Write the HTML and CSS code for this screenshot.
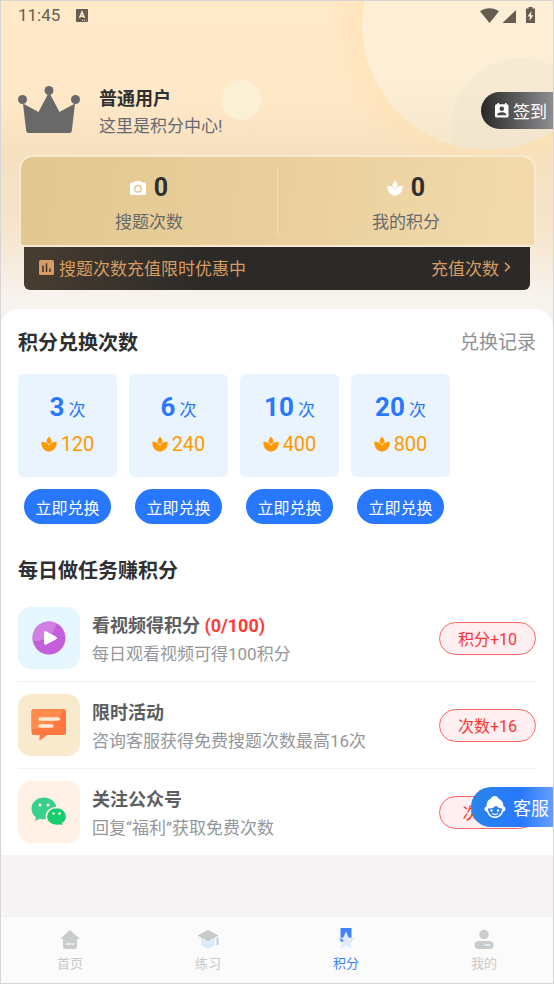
FILE: index.html
```html
<!DOCTYPE html>
<html lang="zh-CN">
<head>
<meta charset="utf-8">
<meta name="viewport" content="width=device-width, initial-scale=1">
<title>积分中心</title>
<link rel="stylesheet" href="styles.css">
</head>
<body>
<svg class="defs" aria-hidden="true">
  <symbol id="spa" viewBox="0 0 18 18">
    <path d="M9 .5C7.500 2.300 6.200 4.200 6.200 5.800 6.200 7.300 7.600 8.600 9 8.900c1.400-.3 2.800-1.600 2.800-3.100C11.800 4.200 10.500 2.300 9 .5Z"/>
    <path d="M9 10.600C7.500 8.200 4.500 6.400.4 6.500 0 13 4 17.300 9 17.600c5-.3 9-4.600 8.600-11.100-4.100-.1-7.100 1.700-8.600 4.100Z"/>
  </symbol>
</svg>
<div class="app">
  <header class="hero">
    <svg class="hero-art" viewBox="0 0 552 308" preserveAspectRatio="xMaxYMin meet" aria-hidden="true">
      <defs>
        <clipPath id="sun"><circle cx="486" cy="24" r="125"/></clipPath>
        <radialGradient id="halo"><stop offset=".78" stop-color="#ffe0ab" stop-opacity=".5"/><stop offset="1" stop-color="#ffe3b8" stop-opacity=".12"/></radialGradient>
        <linearGradient id="disc" x1="0" y1="0" x2="0" y2="1"><stop offset=".7" stop-color="#fcefd5"/><stop offset="1" stop-color="#f4e7cc"/></linearGradient>
      </defs>
      <circle cx="486" cy="24" r="157" fill="url(#halo)"/>
      <circle cx="486" cy="24" r="125" fill="url(#disc)"/>
      <circle cx="520" cy="127" r="70" fill="#efe3ce" opacity=".35" clip-path="url(#sun)"/>
      <circle cx="240" cy="99" r="20" fill="#fbefd4"/>
    </svg>
    <div class="status">
      <span class="clock">11:45</span>
      <svg width="12" height="13" viewBox="0 0 12 13"><rect width="12" height="13" rx="1" fill="#665d50"/><path d="M3.500 9 6 3l2.500 6M4.500 7.200h3" fill="none" stroke="#ffe9c9" stroke-width="1.500"/><path d="M6 11.300h4.500" stroke="#ffe9c9" stroke-dasharray="1 1"/></svg>
      <svg class="signals" width="56" height="17" viewBox="0 0 56 17" fill="#665d50"><path d="M0 4.200C5.500.1 13.500.1 19 4.200L9.500 16Z"/><path d="M36 3v13H22.500Z"/><path d="M48.500 0h4v1.500H55V16h-9V1.500h2.500Z"/><path d="m51.500 4-4 5.400h2.400L49.400 14l4-5.800H51Z" fill="#fcefd5"/></svg>
    </div>
    <div class="profile">
      <svg class="crown" width="62" height="48" viewBox="0 0 62 48" fill="#696969"><circle cx="31" cy="4.500" r="4.500"/><circle cx="4.500" cy="13.500" r="4.500"/><circle cx="57.500" cy="13.500" r="4.500"/><path d="M5 17.500 20.500 26 29.500 9h3L41.500 26 57 17.500 53.800 45q-.2 2-2.300 2H10.500q-2 0-2.300-2Z"/></svg>
      <div class="who">
        <h1>普通用户</h1>
        <p>这里是积分中心!</p>
      </div>
      <button class="checkin" type="button">
        <svg width="14" height="15" viewBox="0 0 14 15"><path fill="#fff" fill-rule="evenodd" d="M2.500 0H4v1.300h6V0h1.500v1.300H12A1.500 1.500 0 0 1 13.500 2.800V13A1.500 1.500 0 0 1 12 14.500H1.500A1.500 1.500 0 0 1 0 13V2.800A1.500 1.500 0 0 1 1.500 1.300h1ZM6.800 3.500a2.300 2.300 0 1 0 0 4.600 2.300 2.300 0 0 0 0-4.600ZM2.300 12.300h9v-.8C11.300 10 8.300 9.200 6.800 9.200s-4.500.8-4.500 2.300Z"/></svg>
        <span>签到</span>
      </button>
    </div>
    <div class="balance">
      <div class="stat">
        <div class="value"><svg width="16" height="14" viewBox="0 0 16 14"><path fill="#fff" fill-rule="evenodd" d="M5.300 0h5.400l1.300 1.600h2.500A1.500 1.500 0 0 1 16 3.100v9.400a1.500 1.500 0 0 1-1.500 1.500h-13A1.500 1.500 0 0 1 0 12.500V3.100a1.500 1.500 0 0 1 1.500-1.500H4ZM8 3.700a4 4 0 1 0 0 8 4 4 0 0 0 0-8Zm0 1.500a2.500 2.500 0 1 1 0 5 2.500 2.500 0 0 1 0-5Z"/></svg><strong>0</strong></div>
        <p>搜题次数</p>
      </div>
      <div class="stat">
        <div class="value"><svg width="16" height="16" fill="#fff"><use href="#spa"/></svg><strong>0</strong></div>
        <p>我的积分</p>
      </div>
    </div>
    <a class="promo" href="#recharge">
      <svg width="15" height="15" viewBox="0 0 15 15"><rect width="15" height="15" rx="1.500" fill="#d79c62"/><path d="M4 5.500V12M7.500 3.200V12M11 8.500V12" stroke="#3f352a" stroke-width="1.500"/></svg>
      <span>搜题次数充值限时优惠中</span>
      <span class="more">充值次数</span>
      <svg width="7" height="10" viewBox="0 0 7 10"><path d="m1 .8 4.300 4.200L1 9.200" fill="none" stroke="#d79c62" stroke-width="1.600"/></svg>
    </a>
  </header>

  <main class="sheet">
    <section>
      <div class="section-head"><h2>积分兑换次数</h2><a href="#history">兑换记录</a></div>
      <div class="offers">
        <div class="offer"><div class="card"><p class="count"><strong>3</strong> 次</p><p class="cost"><svg width="16" height="16"><use href="#spa"/></svg>120</p></div><button type="button">立即兑换</button></div>
        <div class="offer"><div class="card"><p class="count"><strong>6</strong> 次</p><p class="cost"><svg width="16" height="16"><use href="#spa"/></svg>240</p></div><button type="button">立即兑换</button></div>
        <div class="offer"><div class="card"><p class="count"><strong>10</strong> 次</p><p class="cost"><svg width="16" height="16"><use href="#spa"/></svg>400</p></div><button type="button">立即兑换</button></div>
        <div class="offer"><div class="card"><p class="count"><strong>20</strong> 次</p><p class="cost"><svg width="16" height="16"><use href="#spa"/></svg>800</p></div><button type="button">立即兑换</button></div>
      </div>
    </section>
    <section>
      <div class="section-head tasks-head"><h2>每日做任务赚积分</h2></div>
      <ul class="tasks">
        <li>
          <span class="tile video"><svg width="34" height="34" viewBox="0 0 34 34"><circle cx="17" cy="17" r="16.500" fill="#c45fdb"/><path d="M.5 17A16.500 16.500 0 0 1 24 2C24 12 13 21 .8 20Z" fill="#d07fe2"/><path d="M12.500 11.500q0-1.500 1.300-.8l10.300 5.500q1.300.8 0 1.600l-10.300 5.500q-1.300.7-1.300-.8Z" fill="#fff" stroke="#fff" stroke-linejoin="round"/></svg></span>
          <div class="info"><h3>看视频得积分 <em>(0/100)</em></h3><p>每日观看视频可得100积分</p></div>
          <button type="button">积分+10</button>
        </li>
        <li>
          <span class="tile chat"><svg width="36" height="32" viewBox="0 0 36 32"><path d="M3 0h29.500a2.500 2.500 0 0 1 2.500 2.500v21a2.500 2.500 0 0 1-2.500 2.500H16l-6.500 5q-1.500.7-1.200-1L9 26H3a2.500 2.500 0 0 1-2.500-2.500v-21A2.500 2.500 0 0 1 3 0Z" fill="#ff7840"/><path d="M3 0h29C29 11 16 20 .5 20V2.500A2.500 2.500 0 0 1 3 0Z" fill="#ff8b4e"/><path d="M9 10h18.500M9 17h12" stroke="#ffead5" stroke-width="3.500" stroke-linecap="round"/></svg></span>
          <div class="info"><h3>限时活动</h3><p>咨询客服获得免费搜题次数最高16次</p></div>
          <button type="button">次数+16</button>
        </li>
        <li>
          <span class="tile wechat"><svg width="36" height="30" viewBox="0 0 36 30"><path d="M13 .5C6 .5.500 5.200.500 11.500c0 4 2 7 4.500 9L3.800 24l5-2.300q2.200.6 4.200.6C20 22.300 25.500 17.500 25.500 11.500S20 .5 13 .5Z" fill="#38d08a"/><path d="M25.500 10.500c-5.800 0-10.200 4-10.200 9s4.400 9 10.200 9q1.800 0 3.300-.4l3.500 1.500-.6-3.200c2.300-1.500 4-4 4-6.900 0-5-4.400-9-10.200-9Z" fill="#16ce6d" stroke="#fff1e5" stroke-width="1.500"/><g fill="#fff1e5"><circle cx="9" cy="8" r="1.500"/><circle cx="17" cy="8" r="1.500"/><circle cx="22.500" cy="16.500" r="1.200"/><circle cx="28.500" cy="16.500" r="1.200"/></g></svg></span>
          <div class="info"><h3>关注公众号</h3><p>回复“福利”获取免费次数</p></div>
          <button type="button">次数+1</button>
        </li>
      </ul>
    </section>
    <button class="support" type="button">
      <svg width="22" height="24" viewBox="0 0 22 24"><path fill="#fff" d="M7 3.500C7.500 0 14 0 14.500 3.500c3.500 1.500 5 4.500 5 8 1.500.3 2 1.300 2 2.500s-.8 2.500-2.300 2.700C17.800 20.500 14.700 23 11 23s-6.800-2.500-8.200-6.300C1.300 16.500.5 15.200.5 14s.5-2.200 2-2.500c0-3.500 1-6.500 4.500-8Z"/><path d="M4 13.500c3 0 6-.8 8-2.800 1.500 1.700 3.500 2.500 6 2.800-.2 4.800-3.200 8-7 8s-6.800-3.200-7-8Z" fill="#277ef0"/><circle cx="7.500" cy="15.500" r="1.200" fill="#fff"/><circle cx="14" cy="15.500" r="1.200" fill="#fff"/><path d="M8 18.500q3 2 6 0" fill="none" stroke="#fff" stroke-width="1.300"/></svg>
      <span>客服</span>
    </button>
  </main>

  <nav class="tabs">
    <a href="#home"><svg width="20" height="22" viewBox="0 0 20 22"><path d="M10 2 1 10q-.8 1 .3 1H3v7.500Q3 21 5 21h10q2 0 2-2.500V11h1.700q1.100 0 .3-1Z" fill="#c9cccb"/><path d="M5.500 16h9" stroke="#dfebfb" stroke-width="2"/></svg><span>首页</span></a>
    <a href="#practice"><svg width="22" height="22" viewBox="0 0 22 22"><path d="M4 8h14v9l-7 4-7-4Z" fill="#dceafd"/><path d="M11 2 .5 7.500 11 13l10.500-5.500Z" fill="#c6cac9"/><path d="M20.500 9.500V17" stroke="#c9cccb" stroke-width="2"/></svg><span>练习</span></a>
    <a class="active" href="#points" aria-current="page"><svg width="20" height="22" viewBox="0 0 20 22"><path d="M4.500 0h11v14h-11Z" fill="#4285f8"/><path d="m10 3.500 2.700 6 6.600.7-4.900 4.400 1.400 6.500L10 17.800l-5.800 3.300 1.400-6.500L.7 10.200l6.600-.7Z" fill="#dfebff"/><path d="m4.500 11 2.500 2.500" stroke="#4285f8" stroke-width="2"/></svg><span>积分</span></a>
    <a href="#me"><svg width="20" height="22" viewBox="0 0 20 22" fill="#c9cccb"><circle cx="10" cy="6.500" r="4.700"/><rect x=".5" y="13" width="19" height="8" rx="4"/><path d="M10.500 17h6" stroke="#dfebfb" stroke-width="2"/></svg><span>我的</span></a>
  </nav>
</div>
</body>
</html>
```
FILE: styles.css
```css
* { box-sizing: border-box; }
body, h1, h2, h3, p, ul { margin: 0; padding: 0; }
body {
  font-family: Roboto, "Noto Sans CJK SC", sans-serif;
  color: #2e2f31;
  background: #f6f4f5;
}
button { font: inherit; border: 0; padding: 0; cursor: pointer; white-space: nowrap; }
a { color: inherit; text-decoration: none; }
svg { display: block; flex: none; }
.defs { position: absolute; width: 0; height: 0; }

.app {
  min-height: 100vh;
  display: flex;
  flex-direction: column;
  border: 1px solid #d8d5d6;
}

.hero {
  position: relative;
  padding: 0 17px 37px;
  background: linear-gradient(180deg, #ffe9c9 0, #ffe8c8 30%, #f5e0c0 47%, #f6e5cc 70%, #f7f3ef 92%);
}
.hero-art { position: absolute; inset: 0; width: 100%; height: auto; }
.hero > :not(.hero-art) { position: relative; }

.status { display: flex; align-items: center; gap: 16px; height: 28px; color: #665d50; }
.clock { font-size: 17px; }
.signals { margin-left: auto; }

.profile { display: flex; align-items: center; height: 98px; padding-top: 32px; margin-top: 16px; margin-right: -17px; }
.crown { margin-right: 19px; }
.who { flex: 1; padding-top: 6px; }
.who h1 { font-size: 18px; line-height: 26px; }
.who p { font-size: 17px; line-height: 28px; color: #666a70; }
.checkin {
  display: flex;
  align-items: center;
  gap: 4px;
  height: 37px;
  width: 72px;
  padding-left: 14px;
  border-radius: 19px 0 0 19px;
  background: linear-gradient(90deg, #292929, #8e8e91);
  color: #fff;
  font-size: 17px;
}

.balance {
  display: flex;
  align-items: center;
  height: 92px;
  margin-top: 12px;
  margin-left: 1px;
  border: 2px solid #f8ead0;
  border-radius: 14px 14px 4px 4px;
  background: linear-gradient(100deg, #e2c78f, #e9cf9c 50%, #f4dbae);
}
.stat { flex: 1; text-align: center; }
.stat + .stat { border-left: 1px solid #f1dfba; }
.value { display: flex; justify-content: center; align-items: center; gap: 8px; padding-top: 8px; line-height: 24px; }
.value strong { font-size: 25px; }
.stat p { margin-top: 9px; font-size: 17px; line-height: 26px; color: #666a6d; }

.promo {
  display: flex;
  align-items: center;
  gap: 5px;
  height: 43px;
  margin: 0 6px;
  padding: 0 19px 3px 15px;
  border-radius: 0 0 6px 6px;
  background: linear-gradient(90deg, #483d31, #2c2a28 35%);
  color: #d79c62;
  font-size: 17px;
}
.more { margin-left: auto; }

.sheet {
  position: relative;
  margin-top: -18px;
  padding: 0 17px;
  background: #fff;
  border-radius: 18px 18px 0 0;
}
.section-head { display: flex; justify-content: space-between; align-items: center; padding-top: 20px; }
.section-head h2 { font-size: 20px; line-height: 28px; }
.section-head a { font-size: 19px; line-height: 28px; color: #8e9093; }
.offers { display: grid; grid-template-columns: repeat(auto-fill, 99px); gap: 12px; margin-top: 17px; }
.card {
  height: 103px;
  padding-top: 19px;
  border-radius: 6px;
  background: #eaf4ff;
  text-align: center;
}
.count { color: #2878ff; font-size: 17px; line-height: 28px; }
.count strong { font-size: 26px; }
.cost {
  display: flex;
  justify-content: center;
  align-items: center;
  gap: 4px;
  margin-top: 8px;
  color: #ff9900;
  font-size: 20px;
  line-height: 24px;
}
.cost svg { fill: #ff9900; }
.offer button {
  display: block;
  width: 87px;
  height: 35px;
  margin: 12px auto 0;
  border-radius: 18px;
  background: #2878ff;
  color: #fff;
  font-size: 16px;
}

.tasks-head { padding-top: 33px; }
.tasks { list-style: none; margin-top: 10px; }
.tasks li { display: flex; align-items: center; height: 87px; border-bottom: 1px solid #f1f1f1; }
.tasks li:last-child { height: 86px; border: 0; }
.tile {
  display: grid;
  place-items: center;
  width: 62px;
  height: 62px;
  margin-right: 12px;
  border-radius: 13px;
}
.video { background: #e6f6ff; }
.chat { background: #faeacd; }
.wechat { background: #fff1e5; }
.info { flex: 1; padding-top: 3px; }
.info h3 { font-size: 18px; line-height: 28px; color: #5c5e60; }
.info em { font-style: normal; color: #ff3b38; }
.info p { font-size: 17px; line-height: 28px; color: #95979b; }
.tasks button {
  min-width: 97px;
  height: 33px;
  border: 1px solid #fb6664;
  border-radius: 17px;
  background: #ffeff0;
  color: #fa3534;
  font-size: 16px;
}

.support {
  position: absolute;
  right: 0;
  bottom: 28px;
  display: flex;
  align-items: center;
  gap: 7px;
  width: 82px;
  height: 40px;
  padding-left: 13px;
  border-radius: 20px 0 0 20px;
  background: linear-gradient(90deg, #2a85e8, #2878ff 60%, #659dff);
  color: #fff;
  font-size: 18px;
}

.tabs {
  display: flex;
  margin-top: auto;
  height: 67px;
  border-top: 1px solid #eeeeee;
  background: #fbfbfb;
}
.tabs a {
  flex: 1;
  display: flex;
  flex-direction: column;
  align-items: center;
  gap: 4px;
  padding-top: 11px;
  color: #c8c9cb;
  font-size: 13px;
  line-height: 20px;
}
.tabs .active { color: #3c82fb; }
```
